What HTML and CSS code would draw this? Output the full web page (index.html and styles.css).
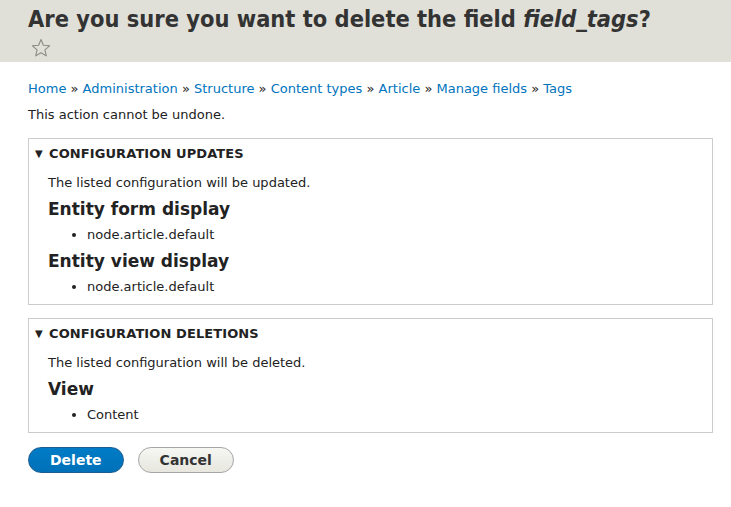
FILE: index.html
```html
<!DOCTYPE html>
<html>
<head>
<meta charset="utf-8">
<link rel="stylesheet" href="styles.css">
</head>
<body>
<header class="page-header">
  <h1 class="page-title">Are you sure you want to delete the field <em>field_tags</em>?</h1>
  <svg class="star" width="20" height="20" viewBox="0 0 20 20"><path d="M10 1.5 L12.4 7.3 L18.6 7.8 L13.9 11.8 L15.3 17.9 L10 14.7 L4.7 17.9 L6.1 11.8 L1.4 7.8 L7.6 7.3 Z" fill="none" stroke="#8a8a85" stroke-width="1.1" stroke-linejoin="round"/></svg>
</header>
<main class="content">
  <nav class="breadcrumb">
    <a href="#">Home</a> » <a href="#">Administration</a> » <a href="#">Structure</a> » <a href="#">Content types</a> » <a href="#">Article</a> » <a href="#">Manage fields</a> » <a href="#">Tags</a>
  </nav>
  <p class="note">This action cannot be undone.</p>
  <section class="details">
    <div class="summary"><span class="tri">▼</span>CONFIGURATION UPDATES</div>
    <div class="details-body">
      <p class="desc">The listed configuration will be updated.</p>
      <h3>Entity form display</h3>
      <ul><li>node.article.default</li></ul>
      <h3>Entity view display</h3>
      <ul><li>node.article.default</li></ul>
    </div>
  </section>
  <section class="details">
    <div class="summary"><span class="tri">▼</span>CONFIGURATION DELETIONS</div>
    <div class="details-body">
      <p class="desc">The listed configuration will be deleted.</p>
      <h3>View</h3>
      <ul><li>Content</li></ul>
    </div>
  </section>
  <div class="actions">
    <button class="button primary">Delete</button>
    <button class="button">Cancel</button>
  </div>
</main>
</body>
</html>
```
FILE: styles.css
```css
html, body { margin: 0; padding: 0; }
body {
  font-family: "DejaVu Sans", sans-serif;
  font-size: 13px;
  color: #222;
  background: #fff;
}
.page-header {
  background: #e0e0d8;
  padding: 4px 28px 0 28px;
  height: 58px;
}
.page-title {
  margin: 0;
  font-family: "DejaVu Sans Condensed", "DejaVu Sans", sans-serif;
  font-stretch: condensed;
  font-size: 23.4px;
  font-weight: bold;
  color: #333;
  line-height: 30px;
  white-space: nowrap;
}
.page-title em { font-style: italic; }
.star { display: block; margin: 4px 0 0 3px; }
.content { padding: 16px 18px 0 28px; }
.breadcrumb { line-height: 20px; margin-top: 1px; color: #222; }
.breadcrumb a { color: #0074bd; text-decoration: none; }
.note { margin: 6px 0 0 0; line-height: 20px; }
.details {
  border: 1px solid #ccc;
  margin-top: 13px;
  padding-bottom: 7px;
}
.summary {
  font-weight: bold;
  color: #222;
  padding: 6px 6px 0 6px;
  line-height: 18px;
  letter-spacing: 0.1px;
}
.tri { font-size: 10px; display: inline-block; width: 14px; position: relative; top: -1px; }
.details-body { padding: 0 19px; }
.desc { margin: 9px 0 0 0; line-height: 20px; }
h3 {
  margin: 5px 0 0 0;
  font-size: 17px;
  font-weight: bold;
  line-height: 22px;
  color: #222;
}
ul { margin: 5px 0 0 0; padding-left: 39px; }
li { line-height: 20px; }
.actions { margin-top: 14px; display: flex; gap: 14px; }
.button {
  font-family: "DejaVu Sans", sans-serif;
  font-size: 14px;
  font-weight: bold;
  border-radius: 20px;
  height: 26px;
  padding: 0 21px;
  border: 1px solid #a6a6a6;
  background: linear-gradient(to bottom, #f6f6f3, #e7e7df);
  color: #333;
  cursor: pointer;
}
.button.primary {
  background: linear-gradient(to bottom, #007bc6, #0071b8);
  border-color: #1e5c90;
  color: #fff;
}
```
